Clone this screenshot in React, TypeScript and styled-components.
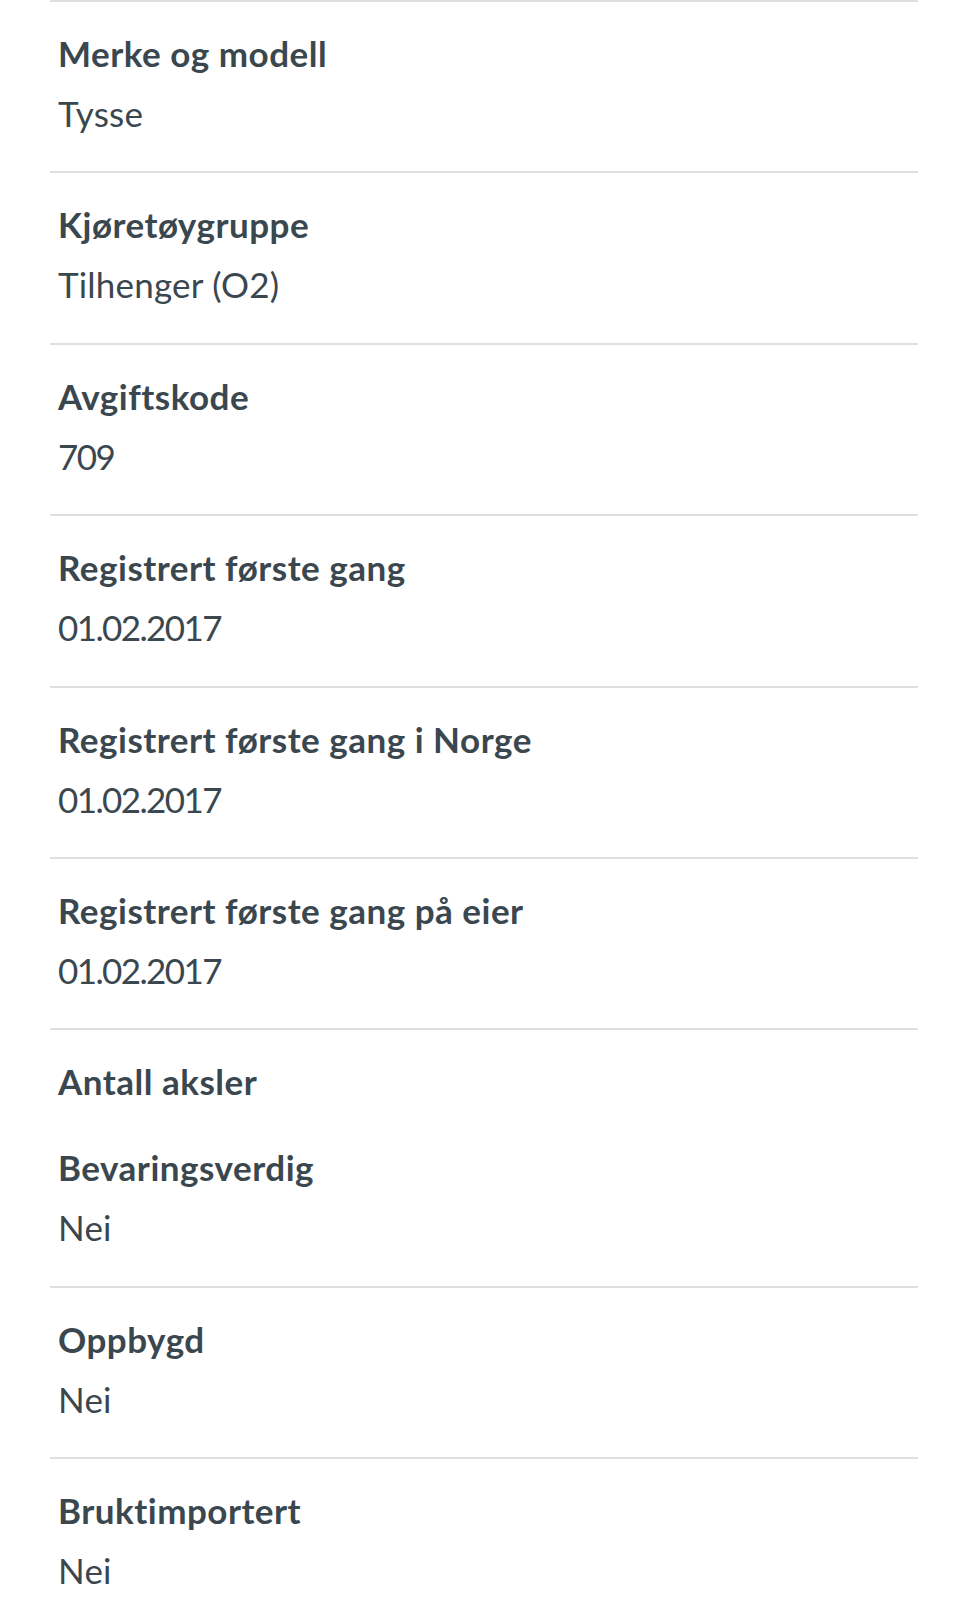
import React from "react";
import styled, { createGlobalStyle } from "styled-components";

const GlobalStyle = createGlobalStyle`
  html, body {
    margin: 0;
    padding: 0;
    background: #ffffff;
  }
  body {
    font-family: Lato, "Open Sans", "Liberation Sans", sans-serif;
    color: #3b474f;
  }
`;

const Page = styled.main`
  padding: 0 42px 0 50px;
  box-sizing: border-box;
  width: 960px;
`;

const List = styled.dl`
  margin: 0;
  padding: 0;
  display: flex;
  flex-direction: column;
`;

const Item = styled.div<{ $divider: boolean; $noValue?: boolean }>`
  border-top: 2px solid ${(p) => (p.$divider ? "#dedfdf" : "transparent")};
  padding: 27px 8px ${(p) => (p.$noValue ? "9px" : "34.4px")};
  display: flex;
  flex-direction: column;
  gap: 12px;
`;

const Label = styled.dt`
  margin: 0;
  font-size: 35px;
  line-height: 48px;
  font-weight: 700;
  color: #3b474f;
  letter-spacing: 0.5px;
`;

const Value = styled.dd<{ $numeric?: boolean }>`
  margin: 0;
  font-size: 35px;
  line-height: 48px;
  font-weight: 400;
  color: #3b474f;
  letter-spacing: ${(p) => (p.$numeric ? "-1.6px" : "0.2px")};
`;

type Row = { label: string; value?: string; divider?: boolean };

const rows: Row[] = [
  { label: "Merke og modell", value: "Tysse" },
  { label: "Kjøretøygruppe", value: "Tilhenger (O2)" },
  { label: "Avgiftskode", value: "709" },
  { label: "Registrert første gang", value: "01.02.2017" },
  { label: "Registrert første gang i Norge", value: "01.02.2017" },
  { label: "Registrert første gang på eier", value: "01.02.2017" },
  { label: "Antall aksler" },
  { label: "Bevaringsverdig", value: "Nei", divider: false },
  { label: "Oppbygd", value: "Nei" },
  { label: "Bruktimportert", value: "Nei" },
];

export default function App() {
  return (
    <>
      <GlobalStyle />
      <Page>
        <List>
          {rows.map((r) => (
            <Item
              key={r.label}
              $divider={r.divider !== false}
              $noValue={!r.value}
            >
              <Label>{r.label}</Label>
              {r.value && (
                <Value $numeric={/^[\d.]+$/.test(r.value)}>{r.value}</Value>
              )}
            </Item>
          ))}
        </List>
      </Page>
    </>
  );
}
